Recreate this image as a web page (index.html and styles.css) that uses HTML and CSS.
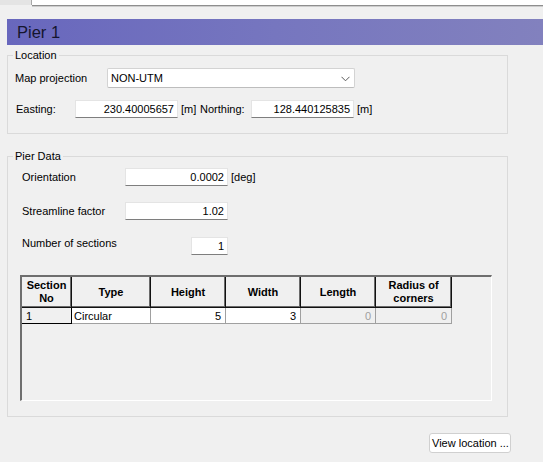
FILE: index.html
```html
<!DOCTYPE html>
<html>
<head>
<meta charset="utf-8">
<link rel="stylesheet" href="styles.css">
</head>
<body>
<div class="topbar"><div class="tab"></div><div class="strip"></div></div>
<div class="titlebar">Pier 1</div>

<fieldset class="group loc">
  <legend>Location</legend>
  <div class="row row-proj">
    <span class="lbl lbl-proj">Map projection</span>
    <div class="select"><span>NON-UTM</span>
      <svg class="chev" width="9" height="6" viewBox="0 0 9 6"><polyline points="0.5,0.8 4.5,4.8 8.5,0.8" fill="none" stroke="#5a5a5a" stroke-width="1"/></svg>
    </div>
  </div>
  <div class="row row-east">
    <span class="lbl lbl-east">Easting:</span>
    <div class="input w103">230.40005657</div>
    <span class="unit unit-m">[m]</span>
    <span class="lbl lbl-north">Northing:</span>
    <div class="input w103">128.440125835</div>
    <span class="unit">[m]</span>
  </div>
</fieldset>

<fieldset class="group pier">
  <legend>Pier Data</legend>
  <div class="row row-orient">
    <span class="lbl lbl-pier">Orientation</span>
    <div class="input w103">0.0002</div>
    <span class="unit">[deg]</span>
  </div>
  <div class="row row-stream">
    <span class="lbl lbl-pier">Streamline factor</span>
    <div class="input w103">1.02</div>
  </div>
  <div class="row row-num">
    <span class="lbl lbl-num">Number of sections</span>
    <div class="input w37">1</div>
  </div>
  <div class="grid">
    <table class="sections">
      <colgroup>
        <col class="c1"><col class="c2"><col class="c3"><col class="c4"><col class="c5"><col class="c6">
      </colgroup>
      <thead>
        <tr>
          <th>Section<br>No</th>
          <th>Type</th>
          <th>Height</th>
          <th>Width</th>
          <th>Length</th>
          <th>Radius of<br>corners</th>
        </tr>
      </thead>
      <tbody>
        <tr>
          <td class="cell-no">1</td>
          <td class="cell-type">Circular</td>
          <td class="num">5</td>
          <td class="num">3</td>
          <td class="num dis">0</td>
          <td class="num dis">0</td>
        </tr>
      </tbody>
    </table>
  </div>
</fieldset>

<div class="btnrow"><button class="btn">View location ...</button></div>
</body>
</html>
```

FILE: styles.css
```css
* { box-sizing: border-box; }
html, body { margin: 0; padding: 0; }
body {
  background: #f0f0f0;
  font-family: "Liberation Sans", Arial, sans-serif;
  font-size: 11px;
  color: #000;
  width: 543px;
  height: 462px;
  overflow: hidden;
}

.topbar { display: flex; height: 6px; }
.tab {
  width: 32px;
  height: 5px;
  background: #e4e4e4;
  border-right: 1px solid #a8a8a8;
}
.strip {
  flex: 1;
  height: 6px;
  background: #fff;
  border-bottom: 1px solid #8e8e8e;
  box-shadow: 0 1px 0 #cdcdcd;
}

.titlebar {
  margin: 13px 0 0 7px;
  height: 26px;
  line-height: 26px;
  padding-left: 10px;
  font-size: 16.5px;
  color: #15152e;
  background: linear-gradient(to right, #6867bd, #7676bf 50%, #8281be);
}

.group {
  width: 501px;
  margin: 0 0 0 7px;
  padding: 0;
  border: 1px solid #dadada;
}
.loc { margin-top: 3px; padding-bottom: 15px; }
.pier { margin-top: 15px; padding-bottom: 15px; }
.group legend {
  margin-left: 5px;
  padding: 0 2px;
  line-height: 14px;
  font-size: 11px;
}

.row { display: flex; align-items: center; }
.lbl { white-space: nowrap; }
.row-proj { margin-top: 6px; height: 20px; }
.lbl-proj { width: 99px; padding-left: 7px; }
.select {
  width: 248px;
  height: 20px;
  background: #fff;
  border: 1px solid #d3d3d3;
  border-bottom-color: #bdbdbd;
  border-radius: 2px;
  display: flex;
  align-items: center;
  justify-content: space-between;
  padding: 0 4px 0 3px;
}
.chev { display: block; margin-top: 1px; }

.row-east { margin-top: 12px; height: 18px; }
.lbl-east { width: 67px; padding-left: 8px; }
.unit { margin-left: 3px; white-space: nowrap; }
.unit-m { width: 19px; }
.lbl-north { width: 51px; overflow: hidden; text-indent: 0; }

.input {
  height: 18px;
  background: #fff;
  border: 1px solid #e4e4e4;
  border-bottom-color: #7e7e7e;
  text-align: right;
  padding-right: 3px;
  line-height: 16px;
  white-space: nowrap;
}
.w103 { width: 103px; }
.w37 { width: 37px; }

.row-orient { margin-top: 5px; height: 18px; }
.row-stream { margin-top: 16px; height: 18px; }
.row-num { margin-top: 17px; height: 18px; align-items: flex-start; }
.lbl-pier { width: 117px; padding-left: 14px; }
.lbl-num { width: 183px; padding-left: 14px; line-height: 12px; }

.grid {
  margin: 20px 0 0 12px;
  width: 472px;
  height: 126px;
  border-top: 2px solid #6e6e6e;
  border-left: 2px solid #6e6e6e;
  border-right: 1px solid #fff;
  border-bottom: 1px solid #fff;
  background: #f0f0f0;
  overflow: hidden;
}
.sections {
  border-collapse: separate;
  border-spacing: 0;
  table-layout: fixed;
  width: 430px;
}
.c1 { width: 50px; }
.c2 { width: 79px; }
.c3 { width: 75px; }
.c4 { width: 75px; }
.c5 { width: 75px; }
.c6 { width: 76px; }

.sections th {
  height: 31px;
  padding: 0 2px;
  font-weight: bold;
  font-size: 11px;
  line-height: 13px;
  text-align: center;
  vertical-align: middle;
  background: #f0f0f0;
  border-right: 1px solid #111;
  border-bottom: 1px solid #111;
  box-shadow: inset -1px -1px 0 #6a6a6a;
}
.sections td {
  height: 16px;
  padding: 0 4px 0 2px;
  line-height: 14px;
  font-size: 11px;
  background: #fff;
  border-right: 1px solid #a0a0a0;
  border-bottom: 1px solid #a0a0a0;
  white-space: nowrap;
}
.sections td.cell-no {
  background: #f0f0f0;
  border-right: 1px solid #000;
  border-bottom: 1px solid #000;
  padding-left: 4px;
}
.sections td.num { text-align: right; }
.sections td.dis { background: #f0f0f0; color: #a0a0a0; }

.btnrow { margin: 16px 0 0 429px; }
.btn {
  display: block;
  width: 82px;
  height: 20px;
  padding: 0 0 0 2px;
  margin: 0;
  background: #fff;
  border: 1px solid #d0d0d0;
  border-radius: 3px;
  font-family: "Liberation Sans", Arial, sans-serif;
  font-size: 11px;
  color: #000;
  text-align: left;
  white-space: nowrap;
  overflow: visible;
}
```
